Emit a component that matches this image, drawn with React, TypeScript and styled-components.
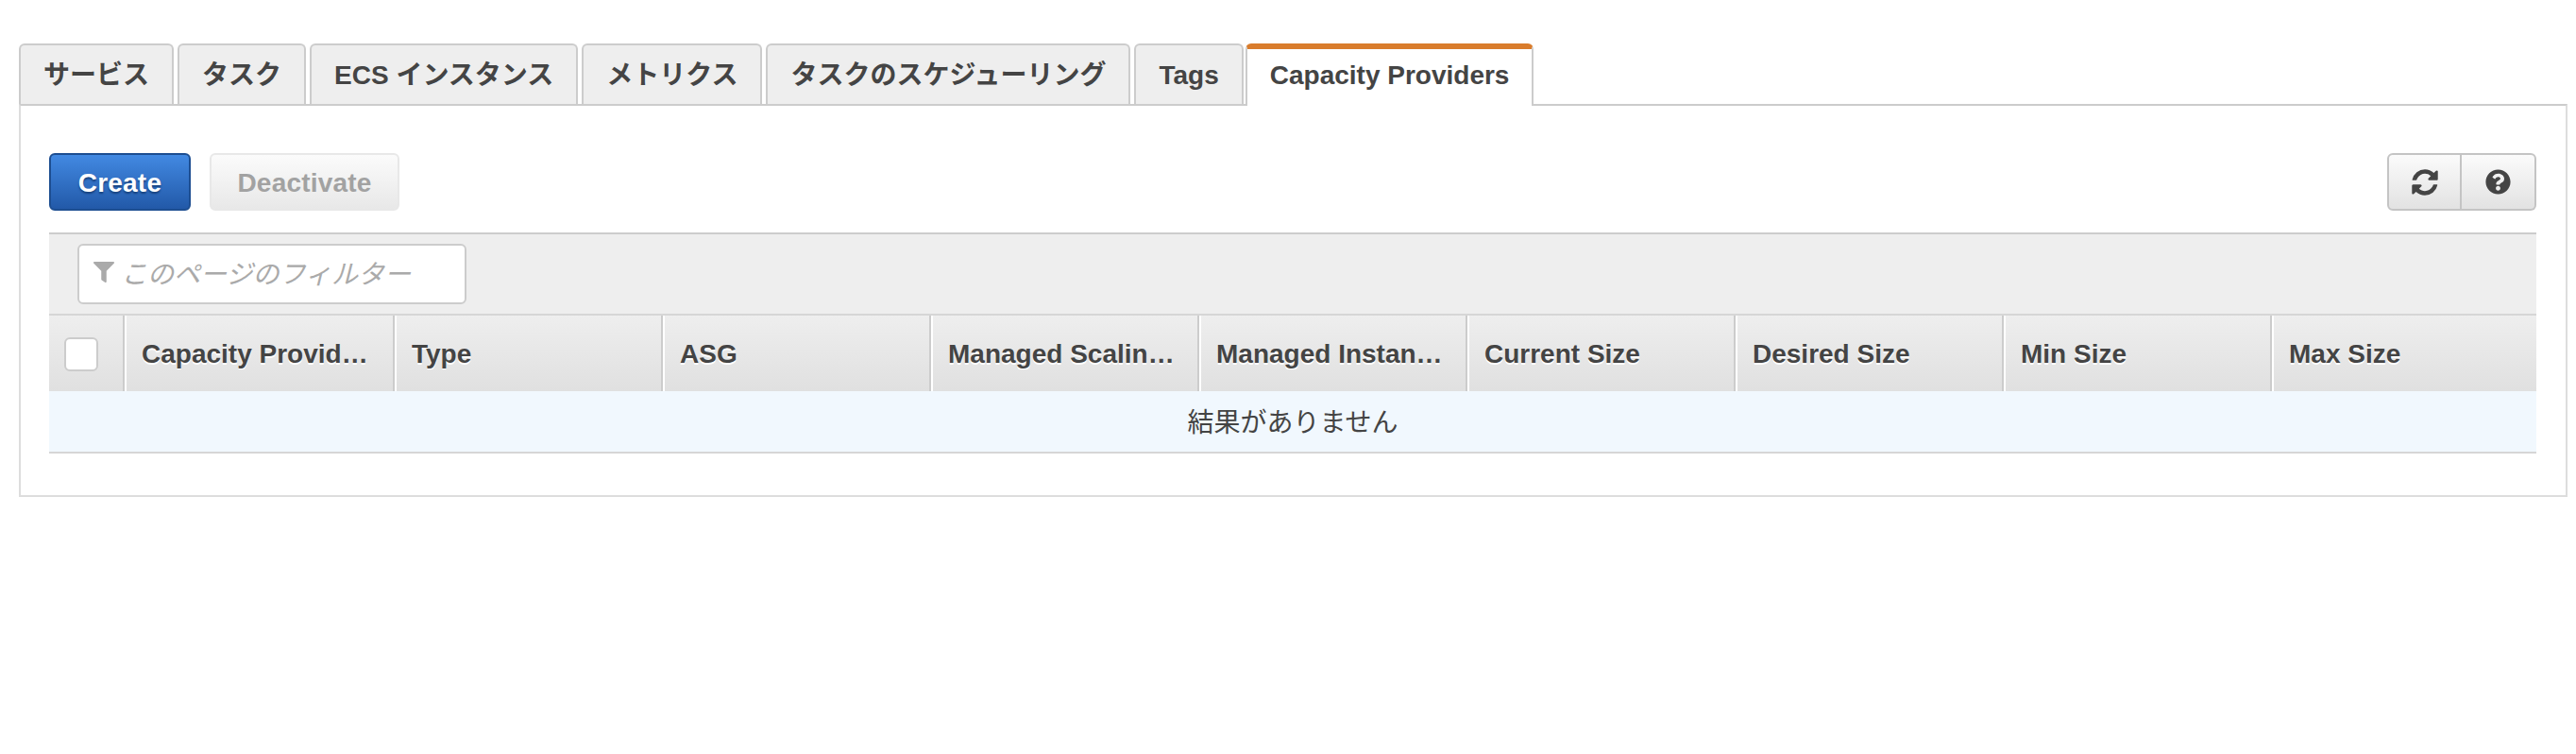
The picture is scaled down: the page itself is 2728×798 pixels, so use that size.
import React from "react";
import styled, { createGlobalStyle } from "styled-components";
import { FaFilter, FaQuestionCircle } from "react-icons/fa";

const GlobalStyle = createGlobalStyle`
  body {
    margin: 0;
    background: #fff;
    color: #444;
    font-family: "Liberation Sans", "Noto Sans CJK JP", sans-serif;
    font-size: 28px;
  }
`;

const Page = styled.div`
  padding: 46px 9px 0 20px;
`;

const TabBar = styled.div`
  display: flex;
  gap: 4px;
  align-items: flex-end;
`;

const Tab = styled.div<{ $active?: boolean }>`
  box-sizing: border-box;
  height: ${(p) => (p.$active ? "66px" : "64px")};
  padding: ${(p) => (p.$active ? "0 24px 4px" : "2px 24px 0")};
  display: flex;
  align-items: center;
  font-weight: bold;
  line-height: 32px;
  white-space: nowrap;
  background: ${(p) => (p.$active ? "#fff" : "#eee")};
  border: 2px solid #ccc;
  border-bottom: none;
  border-top: ${(p) => (p.$active ? "6px solid #d97c2c" : "2px solid #ccc")};
  border-radius: 6px 6px 0 0;
  margin-bottom: ${(p) => (p.$active ? "-2px" : "0")};
  margin-left: ${(p) => (p.$active ? "-2px" : "0")};
  position: relative;
`;

const Panel = styled.div`
  border: 2px solid #ddd;
  border-top-color: #ccc;
  padding: 50px 31px 44px 30px;
`;

const Toolbar = styled.div`
  display: flex;
  align-items: center;
  gap: 20px;
  height: 61px;
  margin-bottom: 23px;
`;

const Button = styled.div<{ $primary?: boolean }>`
  box-sizing: border-box;
  height: 61px;
  padding-top: 2px;
  display: flex;
  align-items: center;
  justify-content: center;
  font-weight: bold;
  border-radius: 6px;
  letter-spacing: 0.2px;
  ${(p) =>
    p.$primary
      ? `width: 150px;
         color: #fff;
         background: linear-gradient(#4289e2, #2259a8);
         border: 2px solid #1d4e91;
         text-shadow: 0 2px 2px #16407c;`
      : `width: 201px;
         color: #a2a2a2;
         background: linear-gradient(#fbfbfb, #e8e8e8);
         border: 2px solid #e8e8e8;`}
`;

const IconGroup = styled.div`
  display: flex;
  margin-left: auto;
  height: 61px;
`;

const IconButton = styled.div`
  box-sizing: border-box;
  width: 79px;
  display: flex;
  align-items: center;
  justify-content: center;
  color: #444;
  background: linear-gradient(#fbfbfb, #e2e2e2);
  border: 2px solid #c4c4c4;
  & + & {
    border-left: none;
  }
  &:first-child {
    border-radius: 6px 0 0 6px;
  }
  &:last-child {
    border-radius: 0 6px 6px 0;
  }
`;

const FilterBand = styled.div`
  box-sizing: border-box;
  height: 88px;
  padding: 10px 30px;
  background: #eee;
  border-top: 2px solid #ccc;
  border-bottom: 2px solid #d6d6d6;
`;

const FilterBox = styled.div`
  box-sizing: border-box;
  width: 412px;
  height: 64px;
  display: flex;
  align-items: center;
  gap: 7px;
  padding: 0 0 4px 15px;
  background: #fff;
  border: 2px solid #ccc;
  border-radius: 6px;
  color: #aaa;
`;

const Placeholder = styled.span`
  font-style: italic;
  font-family: "Noto Sans CJK JP", sans-serif;
  font-weight: 400;
`;

const HeaderRow = styled.div`
  display: grid;
  grid-template-columns: 80px 286px repeat(7, 284px) 1fr;
  height: 80px;
  background: linear-gradient(#eee, #e0e0e0);
`;

const HeaderCell = styled.div`
  box-sizing: border-box;
  display: flex;
  align-items: center;
  padding: 2px 20px 0 16px;
  font-weight: bold;
  text-shadow: 0 2px 0 #fff;
  border-left: 2px solid #fff;
  border-right: 2px solid #ccc;
  min-width: 0;
  &:last-child {
    border-right: none;
  }
`;

const CheckCell = styled.div`
  box-sizing: border-box;
  display: flex;
  align-items: center;
  padding: 2px 0 0 16px;
  border-right: 2px solid #ccc;
`;

const CheckBox = styled.div`
  box-sizing: border-box;
  width: 36px;
  height: 36px;
  background: #fff;
  border: 2px solid #ccc;
  border-radius: 6px;
`;

const Label = styled.span`
  overflow: hidden;
  white-space: nowrap;
  text-overflow: ellipsis;
`;

const EmptyRow = styled.div`
  box-sizing: border-box;
  height: 66px;
  padding-bottom: 3px;
  display: flex;
  align-items: center;
  justify-content: center;
  background: #f1f8fe;
  border-bottom: 2px solid #d6d6d6;
  font-family: "Noto Sans CJK JP", sans-serif;
`;

const RefreshIcon = () => (
  <svg width="32" height="32" viewBox="0 0 1792 1792" fill="currentColor">
    <path d="M1639 1056q0 5-1 7-64 268-268 434.500t-478 166.500q-146 0-282.500-55t-243.500-157l-129 129q-19 19-45 19t-45-19-19-45v-448q0-26 19-45t45-19h448q26 0 45 19t19 45-19 45l-137 137q71 66 161 102t187 36q134 0 250-65t186-179q11-17 53-117 8-23 30-23h192q13 0 22.500 9.500t9.500 22.500zm25-800v448q0 26-19 45t-45 19h-448q-26 0-45-19t-19-45 19-45l138-138q-148-137-349-137-134 0-250 65t-186 179q-11 17-53 117-8 23-30 23h-199q-13 0-22.500-9.500t-9.500-22.500v-7q65-268 270-434.500t480-166.500q146 0 284 55.500t245 156.500l130-129q19-19 45-19t45 19 19 45z" />
  </svg>
);

const tabs = [
  "サービス",
  "タスク",
  "ECS インスタンス",
  "メトリクス",
  "タスクのスケジューリング",
  "Tags",
  "Capacity Providers",
];

const columns = [
  "Capacity Providers",
  "Type",
  "ASG",
  "Managed Scaling Status",
  "Managed Instance Protection",
  "Current Size",
  "Desired Size",
  "Min Size",
  "Max Size",
];

export default function App() {
  return (
    <Page>
      <GlobalStyle />
      <TabBar>
        {tabs.map((t, i) => (
          <Tab key={t} $active={i === tabs.length - 1}>
            {t}
          </Tab>
        ))}
      </TabBar>
      <Panel>
        <Toolbar>
          <Button $primary>Create</Button>
          <Button>Deactivate</Button>
          <IconGroup>
            <IconButton>
              <RefreshIcon />
            </IconButton>
            <IconButton>
              <FaQuestionCircle size={27} />
            </IconButton>
          </IconGroup>
        </Toolbar>
        <FilterBand>
          <FilterBox>
            <FaFilter size={22} />
            <Placeholder>このページのフィルター</Placeholder>
          </FilterBox>
        </FilterBand>
        <HeaderRow>
          <CheckCell>
            <CheckBox />
          </CheckCell>
          {columns.map((c) => (
            <HeaderCell key={c}>
              <Label>{c}</Label>
            </HeaderCell>
          ))}
        </HeaderRow>
        <EmptyRow>結果がありません</EmptyRow>
      </Panel>
    </Page>
  );
}
